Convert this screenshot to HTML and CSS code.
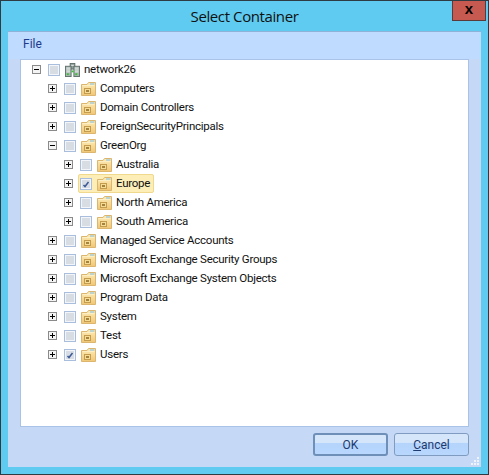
FILE: index.html
```html
<!DOCTYPE html>
<html lang="en">
<head>
    <meta charset="UTF-8">
    <meta name="viewport" content="width=device-width, initial-scale=1.0">
    <title>Select Container</title>
    <link rel="stylesheet" href="styles.css">
</head>
<body>
    <svg class="defs" width="0" height="0">
        <defs>
            <linearGradient id="folderFill" x1="0" y1="0" x2="0" y2="1">
                <stop offset="0" stop-color="#fdeeb9"/>
                <stop offset="1" stop-color="#f0c676"/>
            </linearGradient>
            <symbol id="folder" viewBox="0 0 15 14">
                <path d="M.5 2.5V13.5H14.5V.5H7.5L6 2.5Z" fill="url(#folderFill)" stroke="#dcb56e"/>
                <path d="M9 1.5H13.5V2.5H9Z" fill="#7dbdea"/>
                <path d="M1.5 3.5H13.5V4H1.5Z" fill="#fff8e0"/>
                <rect x="3.5" y="6.5" width="6" height="5" fill="#f4dc96" stroke="#c49c50"/>
                <rect x="5" y="8" width="3" height="2" fill="#a5833c"/>
            </symbol>
            <symbol id="network" viewBox="0 0 16 15">
                <rect x="5.5" y=".5" width="5" height="6" fill="#8d9c97" stroke="#5f6f69"/>
                <path d="M6.5 2.5H9.5" stroke="#eef2f0"/>
                <rect x=".5" y="3.5" width="6" height="11" fill="#a9b5b0" stroke="#5f6f69"/>
                <rect x="9.5" y="3.5" width="6" height="11" fill="#a9b5b0" stroke="#5f6f69"/>
                <path d="M1.5 5.5H5.5M10.5 5.5H14.5M1.5 7.5H5.5M10.5 7.5H14.5M1.5 9.5H5.5M10.5 9.5H14.5" stroke="#eef2f0"/>
                <rect x="2" y="11" width="2" height="2" fill="#35c42f"/>
                <rect x="11" y="11" width="2" height="2" fill="#35c42f"/>
                <rect x="7" y="8" width="2" height="2" fill="#35c42f"/>
            </symbol>
        </defs>
    </svg>

    <div class="window">
        <div class="titlebar">
            <span></span>
            <h1>Select Container</h1>
            <button class="close" type="button">x</button>
        </div>
        <div class="client">
            <div class="menubar"><a href="#">File</a></div>
            <div class="tree">
                <div class="row">
                    <span class="expander minus"></span><span class="check"></span>
                    <svg class="icon"><use href="#network"/></svg><span class="name">network26</span>
                </div>
                <div class="row lv1">
                    <span class="expander"></span><span class="check"></span>
                    <svg class="icon"><use href="#folder"/></svg><span class="name">Computers</span>
                </div>
                <div class="row lv1">
                    <span class="expander"></span><span class="check"></span>
                    <svg class="icon"><use href="#folder"/></svg><span class="name">Domain Controllers</span>
                </div>
                <div class="row lv1">
                    <span class="expander"></span><span class="check"></span>
                    <svg class="icon"><use href="#folder"/></svg><span class="name">ForeignSecurityPrincipals</span>
                </div>
                <div class="row lv1">
                    <span class="expander minus"></span><span class="check"></span>
                    <svg class="icon"><use href="#folder"/></svg><span class="name">GreenOrg</span>
                </div>
                <div class="row lv2">
                    <span class="expander"></span><span class="check"></span>
                    <svg class="icon"><use href="#folder"/></svg><span class="name">Australia</span>
                </div>
                <div class="row lv2">
                    <span class="expander"></span>
                    <div class="selected">
                        <span class="check"><svg viewBox="0 0 8 8"><path d="M1.5 5L3 6.5L6.5 2" fill="none" stroke="#3c5a96" stroke-width="1.5"/></svg></span>
                        <svg class="icon"><use href="#folder"/></svg><span class="name">Europe</span>
                    </div>
                </div>
                <div class="row lv2">
                    <span class="expander"></span><span class="check"></span>
                    <svg class="icon"><use href="#folder"/></svg><span class="name">North America</span>
                </div>
                <div class="row lv2">
                    <span class="expander"></span><span class="check"></span>
                    <svg class="icon"><use href="#folder"/></svg><span class="name">South America</span>
                </div>
                <div class="row lv1">
                    <span class="expander"></span><span class="check"></span>
                    <svg class="icon"><use href="#folder"/></svg><span class="name">Managed Service Accounts</span>
                </div>
                <div class="row lv1">
                    <span class="expander"></span><span class="check"></span>
                    <svg class="icon"><use href="#folder"/></svg><span class="name">Microsoft Exchange Security Groups</span>
                </div>
                <div class="row lv1">
                    <span class="expander"></span><span class="check"></span>
                    <svg class="icon"><use href="#folder"/></svg><span class="name">Microsoft Exchange System Objects</span>
                </div>
                <div class="row lv1">
                    <span class="expander"></span><span class="check"></span>
                    <svg class="icon"><use href="#folder"/></svg><span class="name">Program Data</span>
                </div>
                <div class="row lv1">
                    <span class="expander"></span><span class="check"></span>
                    <svg class="icon"><use href="#folder"/></svg><span class="name">System</span>
                </div>
                <div class="row lv1">
                    <span class="expander"></span><span class="check"></span>
                    <svg class="icon"><use href="#folder"/></svg><span class="name">Test</span>
                </div>
                <div class="row lv1">
                    <span class="expander"></span>
                    <span class="check"><svg viewBox="0 0 8 8"><path d="M1.5 5L3 6.5L6.5 2" fill="none" stroke="#3c5a96" stroke-width="1.5"/></svg></span>
                    <svg class="icon"><use href="#folder"/></svg><span class="name">Users</span>
                </div>
            </div>
            <div class="actions">
                <button class="btn default" type="button">OK</button>
                <button class="btn" type="button"><u>C</u>ancel</button>
            </div>
            <svg class="grip" width="9" height="9" viewBox="0 0 9 9">
                <path d="M6 0h2v2H6zM3 3h2v2H3zM6 3h2v2H6zM0 6h2v2H0zM3 6h2v2H3zM6 6h2v2H6z" fill="#eef4fc"/>
            </svg>
        </div>
    </div>
</body>
</html>
```

FILE: styles.css
```css
* {
    box-sizing: border-box;
    margin: 0;
    padding: 0;
}
html, body {
    width: 489px;
    height: 475px;
    overflow: hidden;
}
body {
    font-family: Roboto, 'Open Sans', Arial, sans-serif;
    font-size: 12px;
    background-color: #5fcbf0;
}
.defs {
    display: block;
    height: 0;
}
.window {
    width: 489px;
    height: 475px;
    display: flex;
    flex-direction: column;
    background-color: #5fcbf0;
    border: 1px solid #2f3b42;
    padding: 0 7px 7px;
}
.titlebar {
    height: 30px;
    flex: none;
    display: grid;
    grid-template-columns: 1fr auto 1fr;
    align-items: start;
}
.titlebar h1 {
    font-family: 'Open Sans', Arial, sans-serif;
    font-size: 15px;
    font-weight: 400;
    line-height: 20px;
    margin-top: 5px;
    color: #111;
    letter-spacing: -0.4px;
}
.close {
    justify-self: end;
    width: 34px;
    height: 20px;
    margin-right: -5px;
    border: 1px solid #5a3a3a;
    border-top: none;
    background-color: #c75a50;
    color: #000;
    font-family: 'Liberation Sans', Arial, sans-serif;
    font-size: 15px;
    font-weight: 700;
    line-height: 14px;
    padding-bottom: 3px;
}
.client {
    flex: 1;
    position: relative;
    display: flex;
    flex-direction: column;
    background-color: #c5d9f6;
    border-top: 1px solid #8fb2d8;
}
.menubar {
    height: 27px;
    flex: none;
    background-color: #bfdbff;
    padding: 3px 0 0 15px;
    line-height: 18px;
}
.menubar a {
    color: #1e3a8a;
    text-decoration: none;
}
.tree {
    height: 368px;
    flex: none;
    margin: 0 12px 0 12px;
    padding: 0 0 0 11px;
    background-color: #fff;
    border: 1px solid #a9c3e8;
    overflow: hidden;
}
.row {
    height: 19px;
    display: flex;
    align-items: center;
    white-space: nowrap;
    color: #111;
}
.lv1 {
    padding-left: 16px;
}
.lv2 {
    padding-left: 32px;
}
.expander {
    width: 9px;
    height: 9px;
    flex: none;
    margin-right: 7px;
    border: 1px solid #8a8a8a;
    background:
        linear-gradient(#000, #000) center / 5px 1px no-repeat,
        linear-gradient(#000, #000) center / 1px 5px no-repeat,
        #f4f4f4;
}
.expander.minus {
    background:
        linear-gradient(#000, #000) center / 5px 1px no-repeat,
        #f4f4f4;
}
.check {
    width: 12px;
    height: 12px;
    flex: none;
    margin-right: 5px;
    padding: 1px;
    border: 1px solid #a9bedc;
    background-color: #d8dde4;
    box-shadow: inset 0 0 0 1px #f3f5f8;
    display: flex;
}
.check svg {
    width: 8px;
    height: 8px;
}
.icon {
    width: 15px;
    height: 14px;
    flex: none;
    margin-right: 4px;
}
.name {
    font-size: 11.5px;
    line-height: 18px;
    letter-spacing: -0.25px;
    margin-bottom: 1px;
}
.selected {
    display: flex;
    align-items: center;
    height: 19px;
    margin-left: -2px;
    padding: 0 3px 0 1px;
    background-color: #fdeeb8;
    border: 1px solid #f0d98c;
    border-radius: 2px;
}
.actions {
    display: flex;
    justify-content: flex-end;
    gap: 6px;
    padding: 6px 12px 0 0;
}
.btn {
    width: 75px;
    height: 23px;
    font-family: inherit;
    font-size: 12px;
    color: #1e3a6e;
    border: 1px solid #7f9cc0;
    border-radius: 3px;
    background: linear-gradient(#d5e6fb 0, #d5e6fb 40%, #b4d4fc 45%, #b9d7fd 100%);
}
.btn.default {
    border: 2px solid #6d8fb8;
}
.grip {
    position: absolute;
    right: 1px;
    bottom: 1px;
}
```
